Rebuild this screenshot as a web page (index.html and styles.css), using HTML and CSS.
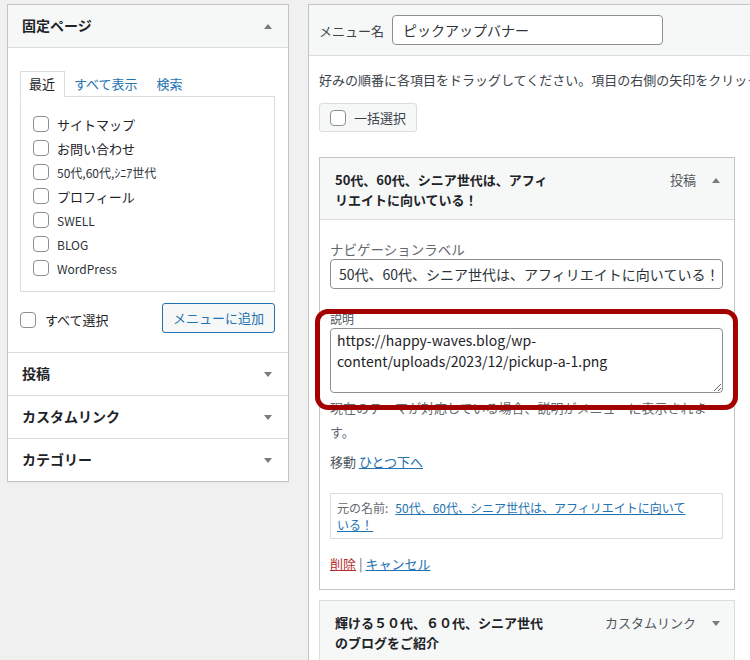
FILE: index.html
```html
<!DOCTYPE html>
<html lang="ja">
<head>
<meta charset="utf-8">
<title>メニュー</title>
<link rel="stylesheet" href="styles.css">
</head>
<body>
<div class="page">
  <div class="side">
    <div class="box">
      <div class="box-head open">
        <span class="box-title">固定ページ</span>
        <span class="tri up"></span>
      </div>
      <div class="box-body">
        <div class="tabs">
          <span class="tab active">最近</span>
          <span class="tab link">すべて表示</span>
          <span class="tab link">検索</span>
        </div>
        <ul class="tab-panel">
          <li><input type="checkbox" class="cb"><span>サイトマップ</span></li>
          <li><input type="checkbox" class="cb"><span>お問い合わせ</span></li>
          <li><input type="checkbox" class="cb"><span class="small">50代,60代,ｼﾆｱ世代</span></li>
          <li><input type="checkbox" class="cb"><span>プロフィール</span></li>
          <li><input type="checkbox" class="cb"><span class="small">SWELL</span></li>
          <li><input type="checkbox" class="cb"><span class="small">BLOG</span></li>
          <li><input type="checkbox" class="cb"><span class="small">WordPress</span></li>
        </ul>
        <div class="add-row">
          <label class="select-all"><input type="checkbox" class="cb"><span>すべて選択</span></label>
          <span class="btn-add">メニューに追加</span>
        </div>
      </div>
      <div class="box-head closed"><span class="box-title">投稿</span><span class="tri down"></span></div>
      <div class="box-head closed"><span class="box-title">カスタムリンク</span><span class="tri down"></span></div>
      <div class="box-head closed"><span class="box-title">カテゴリー</span><span class="tri down"></span></div>
    </div>
  </div>

  <div class="main">
    <div class="main-head">
      <span class="name-label">メニュー名</span>
      <input class="name-input" type="text" value="ピックアップバナー">
    </div>
    <div class="main-body">
      <div class="intro-clip"><p class="intro">好みの順番に各項目をドラッグしてください。項目の右側の矢印をクリックすると、追加の設定オプションが表示されます。</p></div>
      <span class="btn-bulk"><input type="checkbox" class="cb"><span>一括選択</span></span>

      <div class="item open-item">
        <div class="item-head">
          <span class="item-title">50代、60代、シニア世代は、アフィリエイトに向いている！</span>
          <span class="item-type">投稿</span>
          <span class="tri up"></span>
        </div>
        <div class="item-body">
          <label class="f-label">ナビゲーションラベル</label>
          <input class="f-input" type="text" value="50代、60代、シニア世代は、アフィリエイトに向いている！">
          <label class="f-label desc-label">説明</label>
          <textarea class="f-area">https://happy-waves.blog/wp-content/uploads/2023/12/pickup-a-1.png</textarea>
          <p class="f-desc">現在のテーマが対応している場合、説明がメニューに表示されます。</p>
          <p class="move">移動 <a class="lnk">ひとつ下へ</a></p>
          <div class="orig"><span class="orig-label">元の名前:</span><a class="lnk">50代、60代、シニア世代は、アフィリエイトに向いている！</a></div>
          <p class="actions"><a class="del">削除</a> <span class="sep">|</span> <a class="lnk">キャンセル</a></p>
        </div>
      </div>

      <div class="item">
        <div class="item-head">
          <span class="item-title">輝ける５０代、６０代、シニア世代のブログをご紹介</span>
          <span class="item-type">カスタムリンク</span>
          <span class="tri down"></span>
        </div>
      </div>
    </div>
    <div class="highlight"></div>
  </div>
</div>
</body>
</html>
```

FILE: styles.css
```css
html, body {
  margin: 0;
  padding: 0;
  overflow: hidden;
  background: #f0f0f1;
}
body {
  width: 750px;
  height: 660px;
  font-family: "Noto Sans CJK JP", "Noto Sans", sans-serif;
  font-size: 13px;
  color: #1d2327;
}
.page {
  display: flex;
  align-items: flex-start;
  gap: 19px;
  padding: 4px 0 0 7px;
}

/* left column */
.side {
  width: 282px;
  flex: none;
}
.box {
  background: #fff;
  border: 1px solid #c3c4c7;
  box-shadow: 0 1px 1px rgba(0,0,0,0.04);
}
.box-head {
  display: flex;
  align-items: center;
  justify-content: space-between;
  height: 42px;
  padding: 0 16px 0 14px;
}
.box-head.open {
  background: #f6f7f7;
  border-bottom: 1px solid #dcdcde;
}
.box-head.closed {
  border-top: 1px solid #dcdcde;
  height: 42px;
}
.box-title {
  font-size: 14px;
  font-weight: bold;
  position: relative;
  top: -1px;
}
.tri {
  width: 0;
  height: 0;
  border-left: 4px solid transparent;
  border-right: 4px solid transparent;
}
.tri.up { border-bottom: 5px solid #787c82; }
.tri.down { border-top: 5px solid #787c82; }

.box-body {
  padding: 22px 13px 19px 12px;
}
.tabs {
  display: flex;
  align-items: flex-end;
  height: 26px;
}
.tab {
  display: block;
  line-height: 24px;
  padding: 0 9px;
  font-size: 13px;
}
.tab.active {
  padding: 0 9px 0 8px;
  border: 1px solid #dcdcde;
  border-bottom: 1px solid #fff;
  background: #fff;
  position: relative;
  top: 1px;
  z-index: 1;
}
.tab.link { color: #2271b1; }
.tab.link + .tab.link { padding-left: 10px; }

.tab-panel {
  list-style: none;
  margin: 0;
  padding: 15px 0 11px 12px;
  border: 1px solid #dcdcde;
}
.tab-panel li {
  display: flex;
  align-items: center;
  gap: 8px;
  height: 24px;
  font-size: 13px;
}
.tab-panel li .small {
  font-size: 12px;
  color: #2c3338;
}

.cb {
  appearance: none;
  -webkit-appearance: none;
  width: 16px;
  height: 16px;
  margin: 0;
  flex: none;
  border: 1px solid #8c8f94;
  border-radius: 4px;
  background: #fff;
}
.add-row {
  display: flex;
  align-items: center;
  justify-content: space-between;
  margin-top: 11px;
}
.select-all {
  display: flex;
  align-items: center;
  gap: 9px;
  margin-top: 3px;
}
.btn-add {
  display: block;
  height: 28px;
  line-height: 28px;
  padding: 0 10px;
  border: 1px solid #2271b1;
  border-radius: 3px;
  background: #f6f7f7;
  color: #2271b1;
  font-size: 13px;
}

/* right column */
.main {
  position: relative;
  width: 460px;
  flex: none;
  min-height: 660px;
  background: #fff;
  border: 1px solid #c3c4c7;
  border-right: none;
}
.main-head {
  display: flex;
  align-items: center;
  gap: 8px;
  height: 50px;
  padding: 0 10px;
  background: #f6f7f7;
  border-bottom: 1px solid #dcdcde;
}
.name-label {
  font-size: 13px;
  color: #3c434a;
}
.name-input, .f-input {
  box-sizing: border-box;
  height: 30px;
  margin: 0;
  padding: 0 8px;
  border: 1px solid #8c8f94;
  border-radius: 4px;
  background: #fff;
  font-family: inherit;
  font-size: 14px;
  color: #2c3338;
}
.name-input {
  width: 271px;
  padding-left: 10px;
}
.main-body {
  padding: 15px 0 0 10px;
}
.intro-clip {
  width: 431px;
  overflow: hidden;
}
.intro {
  margin: 0;
  white-space: nowrap;
  line-height: 18px;
  color: #3c434a;
}
.btn-bulk {
  display: inline-flex;
  align-items: center;
  gap: 8px;
  box-sizing: border-box;
  height: 29px;
  margin-top: 14px;
  padding: 0 10px;
  border: 1px solid #dcdcde;
  border-radius: 3px;
  background: #f6f7f7;
  color: #3c434a;
}

.item {
  width: 416px;
  box-sizing: border-box;
  margin-top: 25px;
  border: 1px solid #dcdcde;
}
.item + .item { margin-top: 10px; }
.open-item { border-color: #c3c4c7; }
.item-head {
  display: flex;
  align-items: flex-start;
  padding: 12px 14px 9px 15px;
  background: #f6f7f7;
}
.open-item .item-head { border-bottom: 1px solid #dcdcde; }
.item-title {
  width: 216px;
  font-weight: bold;
  line-height: 20px;
}
.item-type {
  margin-left: auto;
  color: #50575e;
  line-height: 20px;
}
.item-head .tri {
  margin: 8px 0 0 16px;
}
.item-body {
  padding: 20px 11px 15px 10px;
}
.f-label {
  display: block;
  line-height: 18px;
  font-size: 13.5px;
  color: #646970;
}
.f-input {
  display: block;
  width: 100%;
  margin-top: 1px;
}
.desc-label {
  margin-top: 21px;
  font-size: 12px;
  color: #50575e;
}
.f-area {
  display: block;
  box-sizing: border-box;
  width: 100%;
  height: 65px;
  margin: 0;
  padding: 1px 6px;
  border: 1px solid #8c8f94;
  border-radius: 4px;
  font-family: inherit;
  font-size: 14px;
  line-height: 21px;
  color: #1d2327;
  resize: vertical;
}
.f-desc {
  max-width: 385px;
  margin: 3px 0 0;
  line-height: 24px;
  color: #646970;
}
.move {
  margin: 8px 0 0;
  line-height: 20px;
  color: #50575e;
}
.lnk {
  color: #2271b1;
  text-decoration: underline;
}
.orig {
  margin-top: 21px;
  padding: 5px 30px 5px 6px;
  border: 1px solid #dcdcde;
  line-height: 17px;
  font-size: 12px;
  color: #646970;
}
.orig-label {
  margin-right: 7px;
}
.actions {
  margin: 15px 0 0;
  line-height: 20px;
}
.del {
  color: #b32d2e;
  text-decoration: underline;
}
.sep { color: #646970; }

.highlight {
  position: absolute;
  left: 6px;
  top: 304px;
  width: 413px;
  height: 91px;
  border: 5px solid #a50000;
  border-radius: 13px;
  pointer-events: none;
}
```
